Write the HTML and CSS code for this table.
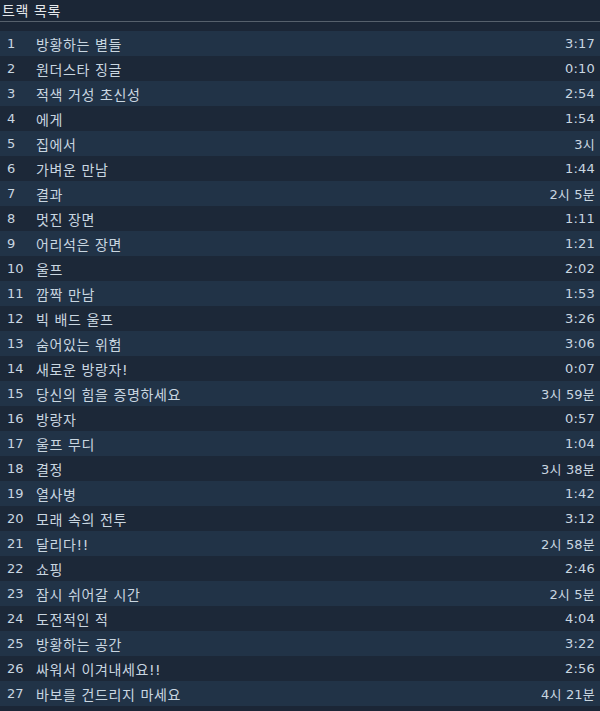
FILE: index.html
```html
<!DOCTYPE html>
<html lang="ko">
<head>
    <meta charset="UTF-8">
    <title>트랙 목록</title>
    <link rel="stylesheet" href="styles.css">
</head>
<body>
    <div class="header">트랙 목록</div>

    <!-- 트랙 -->
    <ul class="tracks">
        <li class="track"><span class="num">1</span><span class="title">방황하는 별들</span><span class="time">3:17</span></li>
        <li class="track"><span class="num">2</span><span class="title">원더스타 징글</span><span class="time">0:10</span></li>
        <li class="track"><span class="num">3</span><span class="title">적색 거성 초신성</span><span class="time">2:54</span></li>
        <li class="track"><span class="num">4</span><span class="title">에게</span><span class="time">1:54</span></li>
        <li class="track"><span class="num">5</span><span class="title">집에서</span><span class="time">3시</span></li>
        <li class="track"><span class="num">6</span><span class="title">가벼운 만남</span><span class="time">1:44</span></li>
        <li class="track"><span class="num">7</span><span class="title">결과</span><span class="time">2시 5분</span></li>
        <li class="track"><span class="num">8</span><span class="title">멋진 장면</span><span class="time">1:11</span></li>
        <li class="track"><span class="num">9</span><span class="title">어리석은 장면</span><span class="time">1:21</span></li>
        <li class="track"><span class="num">10</span><span class="title">울프</span><span class="time">2:02</span></li>
        <li class="track"><span class="num">11</span><span class="title">깜짝 만남</span><span class="time">1:53</span></li>
        <li class="track"><span class="num">12</span><span class="title">빅 배드 울프</span><span class="time">3:26</span></li>
        <li class="track"><span class="num">13</span><span class="title">숨어있는 위험</span><span class="time">3:06</span></li>
        <li class="track"><span class="num">14</span><span class="title">새로운 방랑자!</span><span class="time">0:07</span></li>
        <li class="track"><span class="num">15</span><span class="title">당신의 힘을 증명하세요</span><span class="time">3시 59분</span></li>
        <li class="track"><span class="num">16</span><span class="title">방랑자</span><span class="time">0:57</span></li>
        <li class="track"><span class="num">17</span><span class="title">울프 무디</span><span class="time">1:04</span></li>
        <li class="track"><span class="num">18</span><span class="title">결정</span><span class="time">3시 38분</span></li>
        <li class="track"><span class="num">19</span><span class="title">열사병</span><span class="time">1:42</span></li>
        <li class="track"><span class="num">20</span><span class="title">모래 속의 전투</span><span class="time">3:12</span></li>
        <li class="track"><span class="num">21</span><span class="title">달리다!!</span><span class="time">2시 58분</span></li>
        <li class="track"><span class="num">22</span><span class="title">쇼핑</span><span class="time">2:46</span></li>
        <li class="track"><span class="num">23</span><span class="title">잠시 쉬어갈 시간</span><span class="time">2시 5분</span></li>
        <li class="track"><span class="num">24</span><span class="title">도전적인 적</span><span class="time">4:04</span></li>
        <li class="track"><span class="num">25</span><span class="title">방황하는 공간</span><span class="time">3:22</span></li>
        <li class="track"><span class="num">26</span><span class="title">싸워서 이겨내세요!!</span><span class="time">2:56</span></li>
        <li class="track"><span class="num">27</span><span class="title">바보를 건드리지 마세요</span><span class="time">4시 21분</span></li>
    </ul>
</body>
</html>
```

FILE: styles.css
```css
body {
    margin: 0;
    font-family: "DejaVu Sans", "Noto Sans CJK KR", sans-serif;
    font-size: 13px;
    background-color: #1b2636;
    color: #c9d6e0;
}

.header {
    height: 22px;
    line-height: 22px;
    padding-left: 2px;
    font-size: 14px;
    letter-spacing: 0.6px;
    color: #e4e8ec;
    border-bottom: 1px solid #56606c;
    box-sizing: border-box;
}

.tracks {
    list-style: none;
    margin: 9px 0 0 0;
    padding: 0;
}

.track {
    display: flex;
    align-items: center;
    height: 25px;
    padding: 0 5px 0 7px;
}

.track:nth-child(odd) {
    background-color: #213347;
}

.track:nth-child(even) {
    background-color: #1c2838;
}

.num {
    width: 29px;
}

.title {
    flex: 1;
    font-size: 14px;
    letter-spacing: 0.6px;
}

.time {
    text-align: right;
    letter-spacing: 0.2px;
}
```
